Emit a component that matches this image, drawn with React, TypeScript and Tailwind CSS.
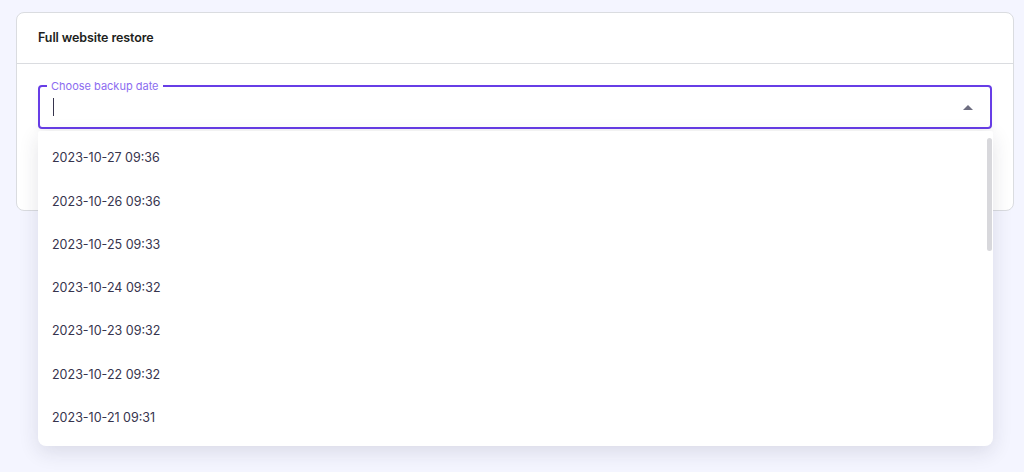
const dates = [
  '2023-10-27 09:36',
  '2023-10-26 09:36',
  '2023-10-25 09:33',
  '2023-10-24 09:32',
  '2023-10-23 09:32',
  '2023-10-22 09:32',
  '2023-10-21 09:31',
];

export default function App() {
  return (
    <div
      className="min-h-screen w-full bg-[#f4f5ff] pt-3 pl-4 pr-[10px]"
      style={{ fontFamily: 'Inter, "Noto Sans", sans-serif' }}
    >
      <div className="bg-white border border-[#dadce0] rounded-lg h-[199px]">
        {/* Header */}
        <div className="h-[51px] flex items-center px-[21px] border-b border-[#dadce0]">
          <h2 className="text-[12.5px] font-semibold text-[#1d1e20] tracking-[-0.1px]">
            Full website restore
          </h2>
        </div>

        {/* Select */}
        <div className="px-[21px] pt-[21px]">
          <div className="relative">
            <div className="relative h-[44px] rounded-[4px] border-2 border-[#673de6] flex items-center pl-[13px] pr-[17px] bg-white shadow-[0_4px_8px_rgba(0,0,0,0.04)]">
              <span className="absolute -top-[8px] left-[7px] bg-white px-1 text-[11px] leading-[14px] text-[#8c6cf0]">
                Choose backup date
              </span>
              <span className="w-px h-[18px] bg-[#36344d]" />
              <div className="ml-auto w-0 h-0 border-l-[5px] border-r-[5px] border-b-[5px] border-l-transparent border-r-transparent border-b-[#6d6d80]" />
            </div>

            {/* Dropdown */}
            <div className="absolute left-0 top-[46px] w-[955px] h-[315px] bg-white rounded-b-lg rounded-t-[2px] shadow-[0_6px_20px_rgba(29,30,60,0.12)] overflow-hidden z-10">
              <ul className="pt-[6px]">
                {dates.map((d) => (
                  <li
                    key={d}
                    className="h-[43.3px] flex items-center px-[14px] text-[12.5px] text-[#36344d]"
                  >
                    {d}
                  </li>
                ))}
              </ul>
              <div className="absolute right-[1px] top-[7px] w-[5px] h-[113px] rounded-full bg-[#d8d8dc]" />
            </div>
          </div>
        </div>
      </div>
    </div>
  );
}
